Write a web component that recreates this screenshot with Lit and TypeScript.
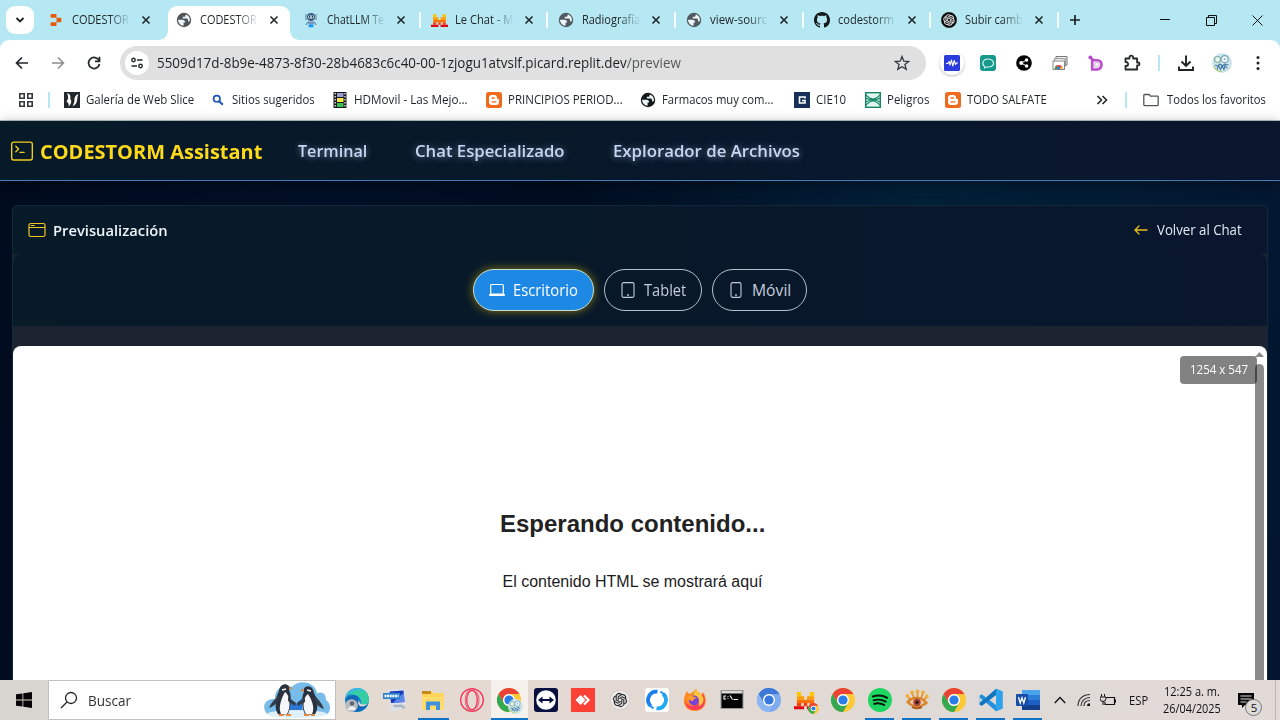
import { LitElement, html, css, svg } from "lit";
import { customElement, property } from "lit/decorators.js";

/* Single-line label condensed or stretched to an exact advance width. */
@customElement("fit-text")
class FitText extends LitElement {
  @property({ type: Number }) w = 50;
  static styles = css`
    :host { display: inline-block; flex: none; white-space: nowrap; }
    .t { display: inline-block; transform-origin: 0 50%; width: max-content; }
  `;
  render() { return html`<span class="t"><slot></slot></span>`; }
  firstUpdated() {
    const s = this.renderRoot.querySelector(".t") as HTMLElement;
    this.style.width = this.w + "px";
    s.style.transform = `scaleX(${this.w / s.offsetWidth})`;
  }
}

const ico = (w: number, h: number, vb: string, body: unknown) =>
  html`<svg width=${w} height=${h} viewBox=${vb} fill="none">${body}</svg>`;

const globe = (c: string) => ico(16, 16, "0 0 16 16", svg`
  <circle cx="8" cy="8" r="7.200" fill=${c}/>
  <path d="M2.100 7.800H6.200C8 7.800 9.200 8.800 9.200 10.600H7.600V13.700C4.400 13.600 2.100 11 2.100 7.800Z" fill="#eef6f8"/>
  <path d="M9.600 2.500V3.400C9.600 4.300 9 4.800 8.200 4.800H6.800V6.500H10.400C11.500 6.500 12 7.200 12 8.100V9.400L13.700 9.200C14.500 6 12.600 3.200 9.600 2.500Z" fill="#eef6f8"/>`);

const chrome = (s = 24) => ico(s, s, "0 0 24 24", svg`
  <circle cx="12" cy="12" r="12" fill="#fcc934"/>
  <path d="M1.600 6A12 12 0 0 1 22.400 6H12A6 6 0 0 0 6.800 15Z" fill="#ea4335"/>
  <path d="M1.600 6A12 12 0 0 0 12 24L17.200 15A6 6 0 0 1 6.800 15Z" fill="#34a853"/>
  <circle cx="12" cy="12" r="6" fill="#fff"/><circle cx="12" cy="12" r="4.600" fill="#2b7de9"/>`);

const close = ico(10, 10, "0 0 10 10", svg`<path d="M1.500 1.500l7 7M8.500 1.500l-7 7" stroke="#20282b" stroke-width="1.600"/>`);

const knot = (bg: string, fg: string, rim: string) => svg`
  <circle cx="12" cy="12" r="11.600" fill=${bg} stroke=${rim} stroke-width=".6"/>
  <path transform="translate(3.600 3.600) scale(.7)" fill=${fg} stroke=${fg} stroke-width=".4" d="M22.2819 9.8211a5.9847 5.9847 0 0 0-.5157-4.9108 6.0462 6.0462 0 0 0-6.5098-2.9A6.0651 6.0651 0 0 0 4.9807 4.1818a5.9847 5.9847 0 0 0-3.9977 2.9 6.0462 6.0462 0 0 0 .7427 7.0966 5.98 5.98 0 0 0 .511 4.9107 6.051 6.051 0 0 0 6.5146 2.9001A5.9847 5.9847 0 0 0 13.2599 24a6.0557 6.0557 0 0 0 5.7718-4.2058 5.9894 5.9894 0 0 0 3.9977-2.9001 6.0557 6.0557 0 0 0-.7475-7.0729zm-9.022 12.6081a4.4755 4.4755 0 0 1-2.8764-1.0408l.1419-.0804 4.7783-2.7582a.7948.7948 0 0 0 .3927-.6813v-6.7369l2.02 1.1686a.071.071 0 0 1 .038.052v5.5826a4.504 4.504 0 0 1-4.4945 4.4944zm-9.6607-4.1254a4.4708 4.4708 0 0 1-.5346-3.0137l.142.0852 4.783 2.7582a.7712.7712 0 0 0 .7806 0l5.8428-3.3685v2.3324a.0804.0804 0 0 1-.0332.0615L9.74 19.9502a4.4992 4.4992 0 0 1-6.1408-1.6464zM2.3408 7.8956a4.485 4.485 0 0 1 2.3655-1.9728V11.6a.7664.7664 0 0 0 .3879.6765l5.8144 3.3543-2.0201 1.1685a.0757.0757 0 0 1-.071 0l-4.8303-2.7865A4.504 4.504 0 0 1 2.3408 7.872zm16.5963 3.8558L13.1038 8.364 15.1192 7.2a.0757.0757 0 0 1 .071 0l4.8303 2.7913a4.4944 4.4944 0 0 1-.6765 8.1042v-5.6772a.79.79 0 0 0-.407-.667zm2.0107-3.0231l-.142-.0852-4.7735-2.7818a.7759.7759 0 0 0-.7854 0L9.409 9.2297V6.8974a.0662.0662 0 0 1 .0284-.0615l4.8303-2.7866a4.4992 4.4992 0 0 1 6.6802 4.66zM8.3065 12.863l-2.02-1.1638a.0804.0804 0 0 1-.038-.0567V6.0742a4.4992 4.4992 0 0 1 7.3757-3.4537l-.142.0805L8.704 5.459a.7948.7948 0 0 0-.3927.6813zm1.0976-2.3654l2.602-1.4998 2.6069 1.4998v2.9994l-2.5974 1.4997-2.6067-1.4997Z"/>`;

const mistral = (s: number) => ico(s, s, "0 0 16 16", svg`
  <path d="M2 2h3v3H2zM11 2h3v3h-3z" fill="#ffc400"/><path d="M2 5h5v2.500H2zM9 5h5v2.500H9z" fill="#ff9d00"/>
  <path d="M2 7.500h12v2.300H2z" fill="#ff7000"/><path d="M2 9.800h3v2.200H2zM6.800 9.800h2.400v2.200H6.800zM11 9.800h3v2.200h-3z" fill="#f5400a"/>
  <path d="M0 12h7v2H0zM9 12h7v2H9z" fill="#e00612"/>`);

const blogger = ico(16, 16, "0 0 16 16", svg`
  <rect width="16" height="16" rx="2.500" fill="#f06a1d"/>
  <path d="M5.800 3h2.600A2.600 2.600 0 0 1 11 5.600c0 .9.4 1.200 1.200 1.300.6.1.8.4.8 1V10a3 3 0 0 1-3 3H6a3 3 0 0 1-3-3V5.800A2.800 2.800 0 0 1 5.800 3Z" fill="#fff"/>
  <path d="M6 6h2.300M6 9.800h4" stroke="#f06a1d" stroke-width="1.300" stroke-linecap="round"/>`);

const github = ico(16, 16, "0 0 16 16", svg`<path fill="#14191c" d="M8 0C3.58 0 0 3.58 0 8c0 3.54 2.29 6.53 5.47 7.59.4.07.55-.17.55-.38 0-.19-.01-.82-.01-1.49-2.01.37-2.53-.49-2.69-.94-.09-.23-.48-.94-.82-1.13-.28-.15-.68-.52-.01-.53.63-.01 1.08.58 1.23.82.72 1.21 1.87.87 2.33.66.07-.52.28-.87.51-1.07-1.78-.2-3.64-.89-3.64-3.95 0-.87.31-1.59.82-2.15-.08-.2-.36-1.02.08-2.12 0 0 .67-.21 2.2.82.64-.18 1.32-.27 2-.27s1.36.09 2 .27c1.53-1.04 2.2-.82 2.2-.82.44 1.1.16 1.92.08 2.12.51.56.82 1.27.82 2.15 0 3.07-1.87 3.75-3.65 3.95.29.25.54.73.54 1.48 0 1.07-.01 1.93-.01 2.2 0 .21.15.46.55.38A8.01 8.01 0 0 0 16 8c0-4.42-3.58-8-8-8Z"/>`);

const replit = ico(16, 16, "0 0 16 16", svg`<path d="M3.400 2h4.300c.5 0 .8.3.8.8v3H3.400c-.5 0-.8-.3-.8-.8V2.800c0-.5.3-.8.8-.8ZM8.500 5.800h4c.5 0 .8.3.8.8v2.800c0 .5-.3.8-.8.8h-4ZM3.400 10.200h5.100v3c0 .5-.3.8-.8.8H3.400c-.5 0-.8-.3-.8-.8V11c0-.5.3-.8.8-.8Z" fill="#e8590c"/>`);

const robot = ico(16, 16, "0 0 16 16", svg`
  <circle cx="8" cy="5" r="4" fill="#3a5b7d"/><rect x="5" y="3.400" width="6" height="3" rx="1.500" fill="#cfe7f7"/>
  <circle cx="6.600" cy="4.900" r=".8" fill="#123"/><circle cx="9.400" cy="4.900" r=".8" fill="#123"/>
  <path d="M3 2v6M13 2v6" stroke="#6c8bab" stroke-width="1.200"/><path d="M4.500 9.500h7l-1 3h-5z" fill="#7894b8"/>
  <rect x="5.500" y="12.600" width="5" height="2.600" rx="1" fill="#1597ff"/><path d="M3 13l1.600-3M13 13l-1.600-3" stroke="#4474a8"/>`);

const tabs = [
  { i: replit, t: "CODESTOR", w: 57, active: false, sep: false },
  { i: globe("#4f5559"), t: "CODESTOR", w: 57, active: true, sep: false },
  { i: robot, t: "ChatLLM Te", w: 57, active: false, sep: true },
  { i: mistral(17), t: "Le Chat - M", w: 58, active: false, sep: true },
  { i: globe("#4f5b61"), t: "Radiografía", w: 58, active: false, sep: true },
  { i: globe("#4f5b61"), t: "view-sourc", w: 57, active: false, sep: true },
  { i: github, t: "codestorm", w: 56, active: false, sep: true },
  { i: ico(16, 16, "0 0 24 24", knot("#0b0b0b", "#fff", "#0b0b0b")), t: "Subir camb", w: 58, active: false, sep: true },
];

const marks = [
  { x: 64, w: 108, t: "Galería de Web Slice", i: ico(16, 16, "0 0 16 16", svg`<rect width="16" height="16" fill="#22272e"/><path d="M3 1.500c3 0 4 2.500 3.200 5.500C8 9 7.500 12 4.500 14.500 5.500 11 3.500 11 2.500 9 4.500 8 4.500 4 3 1.500ZM14.500 2c-3 1-4.500 4-4 7l-1.800 5.500 3-2.500C14 9 12.500 6 14.500 2Z" fill="#fff"/>`) },
  { x: 210, w: 83, t: "Sitios sugeridos", i: ico(16, 16, "0 0 16 16", svg`<circle cx="6.800" cy="6.800" r="3.200" stroke="#1d55b8" stroke-width="1.700"/><path d="M9.200 9.200l3.600 3.600" stroke="#1d55b8" stroke-width="2"/>`) },
  { x: 332, w: 114, t: "HDMovil - Las Mejo...", i: ico(16, 16, "0 0 16 16", svg`<rect x="1.500" width="13" height="16" fill="#15181a"/><path d="M5 1h6.500v4H5z" fill="#9f9bd0"/><path d="M5 6h6.500v4H5z" fill="#f2e64a"/><path d="M5 11h6.500v4H5z" fill="#3bbf52"/><path d="M3.200 1v14M13 1v14" stroke="#fff" stroke-width="1.200" stroke-dasharray="1.500 1.500"/>`) },
  { x: 486, w: 115, t: "PRINCIPIOS PERIOD...", i: blogger },
  { x: 640, w: 111, t: "Farmacos muy com...", i: globe("#15181a") },
  { x: 794, w: 30, t: "CIE10", i: ico(16, 16, "0 0 16 16", svg`<rect width="16" height="16" fill="#17305a"/><path d="M11 6.500V5H5.500v6H11V8.500H8" stroke="#fff" stroke-width="1.600"/>`) },
  { x: 865, w: 42, t: "Peligros", i: ico(16, 16, "0 0 16 16", svg`<rect x=".7" y=".7" width="14.600" height="14.600" fill="#e4f5ee" stroke="#128765" stroke-width="1.400"/><path d="M1 3C4 6 5 7 8 7S12 6 15 3M1 13C4 10 5 9 8 9S12 10 15 13M1 6c2 1 3 2 7 2s5-1 7-2M1 10c2-1 3-2 7-2s5 1 7 2" stroke="#128765" stroke-width="1.100"/>`) },
  { x: 945, w: 80, t: "TODO SALFATE", i: blogger },
];

const avatar = (s: number) => ico(s, s, "0 0 20 20", svg`
  <circle cx="10" cy="10" r="10" fill="#cfe6ea"/><circle cx="5.500" cy="6.500" r="3" stroke="#7cae9b" stroke-width="1.200" fill="#eef7ee"/>
  <circle cx="12.700" cy="6.200" r="3.500" stroke="#78a7c4" stroke-width="1.200" fill="#f6fbfd"/><circle cx="12.700" cy="6.200" r="1.100" fill="#9cb1c5"/>
  <path d="M3 12l3 1 2-2 2.500 2 2-2 4 1M5 16.500l1.500-4 2 4 1.500-3.500 2 3.500 1-4 2.500 3" stroke="#3f78a4" stroke-width="1.100"/><path d="M2 13.500c2 4 5 5 8 5" stroke="#a8cf75" stroke-width="1.200"/>`);

const extensions = [
  html`<span class="halo">${ico(16, 16, "0 0 16 16", svg`<rect width="16" height="16" rx="1.500" fill="#2a3ddc"/><path d="M2 8.500h1.800L5 6.500l1 3.500 1.500-5 1.300 6L10.300 5.500l1.200 4 1-1.500H14" stroke="#fff" stroke-width="1.100" stroke-linejoin="round"/>`)}</span>`,
  ico(16, 16, "0 0 16 16", svg`<rect width="16" height="16" rx="3" fill="#16988c"/><path d="M4.500 11.500C1.500 9.500 2.500 4 8 4s7 5 4 7c-2 1.300-4 1-5 .8L4.700 13Z" stroke="#d6f6f1" stroke-width="1.100"/>`),
  ico(16, 16, "0 0 16 16", svg`<circle cx="8" cy="8" r="7.800" fill="#050505"/><path d="M10.500 5L5.300 8l5.200 3" stroke="#fff"/><circle cx="5.200" cy="8" r="2" fill="#fff"/><circle cx="10.600" cy="5" r="1.700" fill="#fff"/><circle cx="10.600" cy="11" r="1.700" fill="#fff"/>`),
  ico(16, 16, "0 0 16 16", svg`<path d="M4 4V1.500h11v8.500h-2" stroke="#777" fill="#f4f4f4"/><path d="M2.500 6V3.700h10.800v8" stroke="#888" fill="#fafafa"/><rect x="1" y="6" width="11.500" height="8.500" fill="#fff" stroke="#888"/><path d="M2.700 14a4 4 0 0 1 8 0" fill="#e94335"/><path d="M2.700 14a4 4 0 0 1 1.500-3l2.500 3" fill="#2ea44f"/><path d="M10.700 14a4 4 0 0 0-.8-2.500L6.700 14" fill="#fbc02d"/><circle cx="6.700" cy="13" r="1.500" fill="#2e7de9"/>`),
  ico(16, 16, "0 0 16 16", svg`<path d="M4.200 3v11.500h5.300a4.700 4.700 0 0 0 0-9.300H4.200" stroke="#b84fc9" stroke-width="2.600" fill="#fff"/><circle cx="2.400" cy="2.400" r="2" fill="#b84fc9"/><circle cx="8.800" cy="9.800" r="2.300" stroke="#c98bd4" stroke-width=".8" fill="#fff"/>`),
  ico(18, 18, "0 0 18 18", svg`<path d="M2.500 4.500h4v-1a1.800 1.800 0 0 1 3.600 0v1h4v4h1a1.400 1.400 0 0 1 0 2.800h-1v4.200H2.500V12h.6a2 2 0 0 0 0-4h-.6Z" stroke="#25282b" stroke-width="1.800" stroke-linejoin="round"/>`),
];

const taskIcons: { i: unknown; run?: boolean; active?: boolean }[] = [
  { i: ico(24, 24, "0 0 24 24", svg`<circle cx="12" cy="12" r="12" fill="#1787cf"/><path d="M1 8C4-3 24-3 24 12c0 5-5 6-8 5 2-8-7-13-15-9Z" fill="#35cda4"/><path d="M1 8C5-2 17-2 21 4 16 0 5 2 1 10Z" fill="#3cb9e8"/><path d="M1 11C5 5 14 7 14 12c0 4 4 7 9 3-3 8-12 11-18 7Z" fill="#1468b6"/><path d="M14 12c0 4 3 6 9 3.500-2 2-4 3-6 3-3 0-5-3-3-6.500Z" fill="#e5ddd7"/><circle cx="6.500" cy="17.500" r="6.300" fill="#b8bcc0"/><circle cx="7" cy="15.500" r="2.300" fill="#5e6872"/><path d="M2.800 22c0-5 7.800-5 7.800 0Z" fill="#eef0f2"/>`) },
  { i: ico(24, 24, "0 0 24 24", svg`<path d="M5 2l17-1 1 15-15 1Z" fill="#dbe2ee"/><path d="M6.500 3.500l14-1 1 11.500-13.500 1Z" fill="#1d3bb6"/><path d="M14 10l7-5 .5 9-11 1Z" fill="#5c86ea"/><path d="M10 17l9-.5 4 3.500-10 2Z" fill="#a9b4c6"/><path d="M5 20l13-1 2 2-13 2.500Z" fill="#dde3eb"/><rect x="0" y="5" width="17" height="6" fill="#2c83ce"/><path d="M1.500 8h14" stroke="#fff" stroke-width="2.500" stroke-dasharray="2 .6"/>`) },
  { i: ico(24, 24, "0 0 24 24", svg`<path d="M1 3h9l2 2h11v17H1Z" fill="#ffd45a"/><path d="M1 3h9v3H1Z" fill="#c98a18"/><path d="M1 9h22v13H1Z" fill="#ffdc6b"/><path d="M5 22v-8.500h14V22h-4v-4.500H9V22Z" fill="#3f92db"/>`), run: true },
  { i: ico(24, 24, "0 0 24 24", svg`<circle cx="12" cy="12" r="11.300" stroke="#ee3a5c" stroke-width="1.400"/><ellipse cx="12" cy="12" rx="5.300" ry="9.800" stroke="#ee3a5c" stroke-width="1.400"/><path d="M12 .7C3 3 3 21 12 23.300M14.500 3c6 2.500 6 15.500 0 18" stroke="#f0647d" stroke-width="1.100"/>`) },
  { i: html`<span class="stack">${chrome()}<span class="mini">${avatar(15)}</span></span>`, run: true, active: true },
  { i: ico(24, 24, "0 0 24 24", svg`<rect width="24" height="24" rx="3" fill="#07103f"/><circle cx="12" cy="12" r="9.800" fill="#fff"/><path d="M4 12l4.500-3.500v2.500h7V8.500L20 12l-4.500 3.500V13h-7v2.500Z" fill="#07103f"/>`) },
  { i: ico(24, 24, "0 0 24 24", svg`<rect width="24" height="24" fill="#fb4136"/><path d="M4.500 12L9.500 7l5 5-5 5Z" fill="#fff"/><path d="M13 7.500l4.500 4.500L13 16.500" stroke="#fff" stroke-width="2.200"/>`) },
  { i: ico(20, 20, "0 0 24 24", knot("#efedeb", "#222", "#bbb")) },
  { i: ico(24, 24, "0 0 24 24", svg`<rect width="24" height="24" rx="3" fill="#fff"/><path d="M5.800 18A8.300 8.300 0 0 1 12.500 3.700" stroke="#1b80ea" stroke-width="3.800"/><path d="M18.200 6A8.300 8.300 0 0 1 11.500 20.300" stroke="#20aaf5" stroke-width="3.800"/><path d="M3.500 16.500l5 4M20.500 7.500l-5-4" stroke="#1d93ee" stroke-width="2"/>`) },
  { i: ico(24, 24, "0 0 24 24", svg`<path d="M2 7l2-4 2 3 4-2c3-3 4-3 4-3-1 3 4 4 5 6l1-3c6 9 2 19-8 19S-1 15 2 7Z" fill="#ff8a22"/><path d="M19 5c5 6 4 17-7 17C5 22 2 17 2 12c2 6 7 7 11 5 5-2 6-7 6-12Z" fill="#fb3d5b"/><path d="M14 1c-1 3 5 5 6 8 2 5-2 9-5 9 3-3 0-7-3-8-3-2-1-6 2-9Z" fill="#ffc83a"/><circle cx="11" cy="12.500" r="5" fill="#7a41d8"/><path d="M5 8c4-1 5 1 9 2-2 1-4 1-4 3-3 0-5-2-5-5Z" fill="#ff9d29"/>`) },
  { i: ico(24, 24, "0 0 24 24", svg`<rect x="1" y="2.500" width="22" height="18" fill="#050505" stroke="#979797"/><rect x="1.500" y="3" width="21" height="2.500" fill="#d9d9d9"/><path d="M6 8H4v3h2M8 8v.8M8 10.200v.8M10 7.500l2.500 4M13.500 11.500H18" stroke="#fff" stroke-width="1.100"/>`) },
  { i: ico(24, 24, "0 0 24 24", svg`<circle cx="12" cy="12" r="12" fill="#7eaaf0"/><path d="M1.600 6A12 12 0 0 1 22.400 6H12A6 6 0 0 0 6.800 15Z" fill="#3f79d8"/><path d="M1.600 6A12 12 0 0 0 12 24L17.200 15A6 6 0 0 1 6.800 15Z" fill="#8db6f5"/><circle cx="12" cy="12" r="6" fill="#fff"/><circle cx="12" cy="12" r="4.600" fill="#3678df"/>`) },
  { i: html`<span class="stack">${mistral(23)}<span class="mini">${chrome(11)}</span></span>` },
  { i: chrome() },
  { i: ico(24, 24, "0 0 24 24", svg`<circle cx="12" cy="12" r="12" fill="#1ed760"/><path d="M4.800 8.500c5-1.500 10.300-1 14.400 1.300M5.500 12.300c4.300-1.200 8.700-.7 12.300 1.300M6 15.800c3.700-1 7.300-.5 10.300 1.200" stroke="#08140c" stroke-width="1.900" stroke-linecap="round"/>`), run: true },
  { i: ico(24, 24, "0 0 24 24", svg`<path d="M3 9l3 3M7 5l2 5M12.500 4v5M18 5l-2 5M21.500 9l-3 3" stroke="#e59a2f" stroke-width="2"/><g fill="#efad3a"><circle cx="2.500" cy="8" r="1.900"/><circle cx="7" cy="4.500" r="1.900"/><circle cx="12.500" cy="3.500" r="1.900"/><circle cx="18" cy="4.500" r="1.900"/><circle cx="21.800" cy="8.500" r="1.900"/></g><path d="M1 14c5-7 17-7 22 1-6 6-17 6-22-1Z" fill="#d9832b"/><path d="M4.500 14c4-4 11-4 15 .5-4 4-11 4-15-.5Z" fill="#e9c9a0"/><circle cx="12" cy="14.300" r="3.700" fill="#a8443a"/><circle cx="12" cy="14.300" r="1.500" fill="#280d0a"/><path d="M7 19c3 1.500 7 1.500 10 0" stroke="#b25a20" stroke-width="2"/>`), run: true },
  { i: chrome(), run: true },
  { i: ico(24, 24, "0 0 24 24", svg`<path d="M17 .8L23.500 3.500v17L17 23.300 7 14.500l-4.200 3.300L.6 16.500V7.500l2.200-1.300L7 9.500Z" fill="#2191de"/><path d="M17.500 6.500v11L10.500 12Z" fill="#dfd9d5"/><path d="M.6 16.500l2.200 1.300L17.500 6.500V.8L.6 15.500Z" fill="#1274bd"/><path d="M.6 9.500v5L3.500 12Z" fill="#dfd9d5"/><path d="M17 .8L23.500 3.500v17L17 23.300Z" fill="#2da3ee"/>`), run: true },
  { i: ico(24, 24, "0 0 24 24", svg`<rect x="6" y="2" width="18" height="20" rx="1.500" fill="#1d5fc4"/><path d="M6 2h18v5H6z" fill="#4aa3ec"/><path d="M6 7h18v5H6z" fill="#2c7ed8"/><path d="M6 17h18v5H6z" fill="#123f8c"/><rect y="6" width="12" height="12" rx="1" fill="#164ca5"/><path d="M2.500 9l1.700 6L6 9.800 7.800 15 9.500 9" stroke="#fff" stroke-width="1.300"/>`), run: true },
];

@customElement("app-root")
class AppRoot extends LitElement {
  static styles = css`
    :host { display: flex; flex-direction: column; width: 1280px; height: 720px; overflow: hidden; font-family: "Open Sans", "Noto Sans", sans-serif; color: #1f2326; }
    * { box-sizing: border-box; }
    svg { display: block; flex: none; }
    .center { display: flex; align-items: center; justify-content: center; }

    .strip { height: 40px; flex: none; background: #b5e8f3; display: flex; align-items: stretch; padding-left: 6px; }
    .chev { width: 28px; height: 28px; margin: 6px 4px 0 0; border-radius: 9px; background: #fff; flex: none; }
    .tab { width: 127.600px; flex: none; display: flex; padding: 6px 0 0 2px; }
    .body { display: flex; align-items: center; height: 28px; width: 122px; padding-left: 8px; }
    .active .body { background: #fff; height: 34px; border-radius: 9px 9px 0 0; padding-bottom: 6px; position: relative; }
    .active .body::before, .active .body::after { content: ""; position: absolute; bottom: 0; width: 9px; height: 9px; }
    .active .body::before { left: -9px; background: radial-gradient(circle at 0 0, transparent 8.500px, #fff 9px); }
    .active .body::after { right: -9px; background: radial-gradient(circle at 100% 0, transparent 8.500px, #fff 9px); }
    .fav { width: 16px; height: 16px; flex: none; }
    .title { width: 60px; margin: 0 9px 0 8px; flex: none; font-size: 12.300px; line-height: 18px; -webkit-mask-image: linear-gradient(90deg, #000 62%, transparent 98%); mask-image: linear-gradient(90deg, #000 62%, transparent 98%); }
    .sep { width: 2px; height: 16px; background: #f4fcfe; margin: 6px 0 0 3px; }
    .plus { width: 30px; padding-left: 2px; }
    .win { margin-left: auto; display: flex; }
    .win .center { width: 46px; }

    .chrome-wrap { background: #b5e8f3; flex: none; }
    .tools { height: 40px; background: #fff; border-radius: 9px 9px 0 0; display: flex; align-items: center; padding-top: 6px; }
    .navs { display: flex; padding-left: 4px; width: 120px; }
    .nav { width: 36px; height: 34px; }
    .omni { width: 806px; height: 34px; border-radius: 17px; background: #e0e0e0; display: flex; align-items: center; padding: 0 15px 0 5px; margin-right: 8px; }
    .site { width: 24px; height: 24px; border-radius: 50%; background: #fff; margin-right: 8px; }
    .url { font-size: 14px; line-height: 20px; color: #1d2023; }
    .url i { font-style: normal; color: #55585a; }
    .star { margin-left: auto; }
    .ext { width: 36px; height: 34px; }
    .halo { width: 24px; height: 24px; border-radius: 50%; background: #fff; box-shadow: 0 1px 3px #0004; display: flex; align-items: center; justify-content: center; }
    .vsep { width: 18px; }
    .bar { width: 2px; height: 16px; background: #b5e8f3; }

    .marks { height: 40px; background: #fff; flex: none; display: flex; align-items: center; font-size: 12.300px; line-height: 18px; padding: 0 14px 0 18px; }
    .marks .grid { width: 30px; }
    .marks > .bar { margin-right: 14px; }
    .mark { display: flex; align-items: center; gap: 6px; flex: none; }
    .all { margin-left: auto; display: flex; align-items: center; }
    .all .bar { margin: 0 16px 0 17px; }
    .all fit-text { margin-left: 8px; }

    .page { height: 560px; flex: none; border-top: 1px solid #b8c2c6; background: linear-gradient(100deg, #010b1e 0%, #010f26 25%, #010d20 42%, #021f38 68%, #021a34 84%, #03152f 100%); display: flex; flex-direction: column; }
    .head { height: 60px; flex: none; background: linear-gradient(90deg, #071a28, #08182a 50%, #0a162e); border-bottom: 1px solid #3b7cba; box-shadow: 0 3px 12px #0006; display: flex; align-items: center; padding-left: 11px; }
    .brand { color: #ffd91a; font-weight: 700; font-size: 19.800px; line-height: 30px; margin: 3px 36px 0 7px; }
    .link { color: #c9d6f2; font-weight: 600; font-size: 16.600px; line-height: 26px; margin-right: 48px; text-shadow: 0 0 8px #b9c9ee66, 0 2px 6px #b9c9ee44; }
    .panel { margin: 24px 12px 0; border: 1px solid #12293c; border-bottom: 0; border-radius: 5px 5px 0 0; background: #1c2331; flex: 1; display: flex; flex-direction: column; overflow: hidden; }
    .phead { height: 48px; flex: none; background: linear-gradient(90deg, #071a28, #08182a 60%, #09162e); display: flex; align-items: center; padding: 0 25px 0 15px; }
    .ptitle { color: #f1f5fb; font-weight: 600; font-size: 15px; line-height: 22px; margin-left: 7px; }
    .back { margin-left: auto; display: flex; align-items: center; gap: 9px; color: #e3e9f4; font-size: 14px; line-height: 20px; }
    .devices { height: 72px; flex: none; background: linear-gradient(90deg, #071a28, #08182a 60%, #09162e); border-radius: 8px 8px 0 0; display: flex; justify-content: center; gap: 10px; padding-top: 15px; }
    .pill { height: 42px; border: 1px solid #b3bfcd; border-radius: 21px; display: flex; align-items: center; color: #c3cddf; font-size: 15.700px; line-height: 24px; padding: 0 15px; gap: 8px; }
    .pill.on { background: #1e88e5; color: #fff; border-color: #c7dcc9; box-shadow: 0 0 10px #ffd70080; }
    .frame { flex: 1; margin-top: 20px; background: #fff; border-radius: 8px 8px 0 0; display: flex; position: relative; }
    .doc { flex: 1; display: flex; flex-direction: column; align-items: center; font-family: "Liberation Sans", Arial, sans-serif; padding-top: 164px; }
    h2 { margin: 0; font-size: 24px; line-height: 28px; color: #222; }
    p { margin: 35px 0 0; font-size: 16px; line-height: 18px; color: #1c1c1c; }
    .scroll { width: 15px; display: flex; flex-direction: column; align-items: center; padding-top: 6px; }
    .thumb { width: 9px; flex: 1; border-radius: 5px 5px 0 0; background: #8b8b8b; margin-top: 7px; }
    .size { position: absolute; right: 10px; top: 10px; width: 77px; height: 28px; border-radius: 4px; background: #0008; opacity: .92; color: #fff; font-size: 12.300px; line-height: 18px; }

    .task { height: 40px; flex: none; background: linear-gradient(90deg, #d8d6d1, #e5dad2 28%, #e3d9d2 50%, #dfdad7 75%, #e2dad6); display: flex; align-items: stretch; }
    .start { width: 48px; }
    .search { width: 288px; background: #fff; border: 1px solid #c3c1be; display: flex; align-items: center; padding: 0 4px 0 11px; }
    .search fit-text { font-size: 14.800px; line-height: 22px; color: #333; margin: 0 auto 0 10px; }
    .apps { display: flex; padding-left: 2px; flex: none; }
    .app { width: 37.050px; display: flex; align-items: center; justify-content: center; position: relative; }
    .app:nth-child(-n+4) { width: 38.200px; }
    .app.run::after { content: ""; position: absolute; bottom: 0; left: 4px; right: 4px; height: 2px; background: #0f74c8; }
    .app.active { background: #f6f1ed; }
    .app.active::after { left: 0; right: 0; }
    .stack { position: relative; }
    .mini { position: absolute; right: -2px; bottom: -2px; }
    .tray { display: flex; align-items: center; flex: 1; color: #111; font-size: 12.400px; line-height: 17px; padding-left: 2px; }
    .cell { width: 24px; display: flex; justify-content: center; }
    .esp { margin-left: 9px; }
    .clock { width: 58px; margin-left: 15px; display: flex; flex-direction: column; align-items: center; }
    .note { position: relative; margin-left: 17px; }
    .badge { position: absolute; left: 7px; top: 7px; width: 17px; height: 17px; border-radius: 50%; background: #dedcda; border: 1px solid #777; font-size: 11.500px; }
    .edge { width: 1px; align-self: stretch; background: #b9b4b0; margin-left: auto; margin-right: 4px; }
  `;

  render() {
    return html`
      <div class="strip">
        <div class="chev center">${ico(10, 8, "0 0 10 8", svg`<path d="M1.500 2L5 5.500 8.500 2" stroke="#1c2123" stroke-width="1.800"/>`)}</div>
        ${tabs.map(t => html`<div class="tab ${t.active ? "active" : ""}">
          <div class="body"><span class="fav">${t.i}</span><div class="title"><fit-text w=${t.w}>${t.t}</fit-text></div>${close}</div>
          ${t.sep ? html`<span class="sep"></span>` : ""}</div>`)}
        <div class="plus center">${ico(12, 12, "0 0 12 12", svg`<path d="M6 1v10M1 6h10" stroke="#1c2123" stroke-width="1.700"/>`)}</div>
        <div class="win">
          <div class="center">${ico(10, 10, "0 0 10 10", svg`<path d="M0 4.500h10" stroke="#111"/>`)}</div>
          <div class="center">${ico(11, 11, "0 0 11 11", svg`<path d="M.5 2.500h8v8h-8zM2.500 2.500v-2h8v8h-2" stroke="#111"/>`)}</div>
          <div class="center">${ico(11, 11, "0 0 11 11", svg`<path d="M.5.5l10 10M10.500.5l-10 10" stroke="#111"/>`)}</div>
        </div>
      </div>
      <div class="chrome-wrap"><div class="tools">
        <div class="navs">
          <div class="nav center">${ico(14, 14, "0 0 14 14", svg`<path d="M13 7H1.500M7 1.500L1.500 7 7 12.500" stroke="#222629" stroke-width="1.700"/>`)}</div>
          <div class="nav center">${ico(14, 14, "0 0 14 14", svg`<path d="M1 7h11.500M7 1.500L12.500 7 7 12.500" stroke="#8b8e90" stroke-width="1.500"/>`)}</div>
          <div class="nav center">${ico(14, 14, "0 0 14 14", svg`<path d="M12 4.500A5.500 5.500 0 1 0 12.500 8" stroke="#222629" stroke-width="1.700"/><path d="M12.500.8v4.500H8" stroke="#222629" stroke-width="1.700"/>`)}</div>
        </div>
        <div class="omni">
          <span class="site center">${ico(14, 12, "0 0 14 12", svg`<circle cx="3.500" cy="3" r="1.700" stroke="#25282a" stroke-width="1.400"/><path d="M7 3h5.500M1.500 9H7" stroke="#25282a" stroke-width="1.500"/><circle cx="10.500" cy="9" r="1.700" stroke="#25282a" stroke-width="1.400"/>`)}</span>
          <fit-text class="url" w="524">5509d17d-8b9e-4873-8f30-28b4683c6c40-00-1zjogu1atvslf.picard.replit.dev<i>/preview</i></fit-text>
          <span class="star">${ico(18, 18, "0 0 18 18", svg`<path d="M9 2.600l1.800 4.600 4.900.3-3.800 3.100 1.300 4.800L9 12.700l-4.200 2.700 1.300-4.800-3.800-3.100 4.900-.3Z" stroke="#34383a" stroke-width="1.300"/>`)}</span>
        </div>
        ${extensions.map(e => html`<div class="ext center">${e}</div>`)}
        <div class="vsep center"><span class="bar"></span></div>
        <div class="ext center">${ico(18, 18, "0 0 18 18", svg`<path d="M9 1.500v10M4.500 7.500L9 12l4.500-4.500M2 12.500V16h14v-3.500" stroke="#202326" stroke-width="1.900"/>`)}</div>
        <div class="ext center">${avatar(20)}</div>
        <div class="ext center">${ico(4, 16, "0 0 4 16", svg`<g fill="#202326"><circle cx="2" cy="2.500" r="1.500"/><circle cx="2" cy="8" r="1.500"/><circle cx="2" cy="13.500" r="1.500"/></g>`)}</div>
      </div></div>
      <div class="marks">
        <span class="grid">${ico(16, 16, "0 0 16 16", svg`<path d="M1.800 1.800h4.400v4.400H1.800zM9.800 1.800h4.400v4.400H9.800zM1.800 9.800h4.400v4.400H1.800zM9.800 9.800h4.400v4.400H9.800z" stroke="#34383b" stroke-width="1.600"/>`)}</span>
        <span class="bar"></span>
        ${marks.map((m, k) => html`<div class="mark" style="width:${(marks[k + 1]?.x ?? 1067) - m.x}px">${m.i}<fit-text w=${m.w}>${m.t}</fit-text></div>`)}
        <div class="all">
          ${ico(12, 10, "0 0 12 10", svg`<path d="M1.500 1L5.500 5l-4 4M6.500 1l4 4-4 4" stroke="#202326" stroke-width="1.600"/>`)}
          <span class="bar"></span>
          ${ico(16, 14, "0 0 16 14", svg`<path d="M.8 2.500v9.300c0 .5.300.8.800.8h12.800c.5 0 .8-.3.800-.8V4c0-.5-.3-.8-.8-.8H7.500L6 1.500H1.600c-.5 0-.8.4-.8 1Z" stroke="#515558" stroke-width="1.300"/>`)}
          <fit-text w="99">Todos los favoritos</fit-text>
        </div>
      </div>
      <div class="page">
        <div class="head">
          ${ico(22, 22, "0 0 16 16", svg`<path fill="#f2cd1d" d="M6 9a.5.5 0 0 1 .5-.5h3a.5.5 0 0 1 0 1h-3A.5.5 0 0 1 6 9M3.854 4.146a.5.5 0 1 0-.708.708L4.793 6.500 3.146 8.146a.5.5 0 1 0 .708.708l2-2a.5.5 0 0 0 0-.708z"/><path fill="#f2cd1d" d="M2 1a2 2 0 0 0-2 2v10a2 2 0 0 0 2 2h12a2 2 0 0 0 2-2V3a2 2 0 0 0-2-2zm12 1a1 1 0 0 1 1 1v10a1 1 0 0 1-1 1H2a1 1 0 0 1-1-1V3a1 1 0 0 1 1-1z"/>`)}
          <fit-text class="brand" w="222">CODESTORM Assistant</fit-text>
          <fit-text class="link" w="69">Terminal</fit-text>
          <fit-text class="link" w="150">Chat Especializado</fit-text>
          <fit-text class="link" w="187">Explorador de Archivos</fit-text>
        </div>
        <div class="panel">
          <div class="phead">
            ${ico(18, 16, "0 0 18 16", svg`<rect x="1" y="1.500" width="16" height="13" rx="1.800" stroke="#f0c520" stroke-width="1.200"/><path d="M1 5.500h16" stroke="#f0c520" stroke-width="1.100"/><path d="M3 3.500h3.500" stroke="#f0c520"/>`)}
            <fit-text class="ptitle" w="115">Previsualización</fit-text>
            <div class="back">${ico(14, 12, "0 0 14 12", svg`<path d="M13 6H1.500M5 2L1 6l4 4" stroke="#e6bf1e" stroke-width="1.300" stroke-linecap="round"/>`)}<fit-text w="85">Volver al Chat</fit-text></div>
          </div>
          <div class="devices">
            <div class="pill on">${ico(16, 16, "0 0 16 16", svg`<rect x="1.700" y="2.500" width="12.600" height="9.500" rx="1" stroke="#fff" stroke-width="1.200"/><path d="M0 12h16v.700a1.300 1.300 0 0 1-1.300 1.300H1.300A1.300 1.300 0 0 1 0 12.700Z" fill="#fff"/>`)}<fit-text w="65">Escritorio</fit-text></div>
            <div class="pill">${ico(16, 16, "0 0 16 16", svg`<rect x="2" y=".6" width="12" height="14.800" rx="1.600" stroke="#c3cddf" stroke-width="1.100"/><circle cx="8" cy="13" r=".9" fill="#c3cddf"/>`)}<fit-text w="42">Tablet</fit-text></div>
            <div class="pill">${ico(16, 16, "0 0 16 16", svg`<rect x="3" y=".6" width="10" height="14.800" rx="1.600" stroke="#c3cddf" stroke-width="1.100"/><circle cx="8" cy="13" r=".9" fill="#c3cddf"/>`)}<fit-text w="39">Móvil</fit-text></div>
          </div>
          <div class="frame">
            <div class="doc"><h2><fit-text w="265">Esperando contenido...</fit-text></h2><p><fit-text w="260">El contenido HTML se mostrará aquí</fit-text></p></div>
            <div class="scroll">${ico(9, 5, "0 0 9 5", svg`<path d="M4.500 0L9 5H0Z" fill="#8b8b8b"/>`)}<span class="thumb"></span></div>
            <div class="size center"><fit-text w="58">1254 x 547</fit-text></div>
          </div>
        </div>
      </div>
      <div class="task">
        <div class="start center">${ico(16, 16, "0 0 16 16", svg`<path d="M0 2.300L6.500 1.400v6.200H0ZM7.300 1.300L16 0v7.600H7.300ZM0 8.400h6.500v6.200L0 13.700ZM7.300 8.400H16V16l-8.700-1.300Z" fill="#050505"/>`)}</div>
        <div class="search">
          ${ico(18, 18, "0 0 18 18", svg`<circle cx="11" cy="7" r="5.500" stroke="#222" stroke-width="1.300"/><path d="M7 11L1 17" stroke="#222" stroke-width="1.300"/>`)}
          <fit-text w="43">Buscar</fit-text>
          ${ico(68, 36, "0 0 68 36", svg`
            <path d="M4 32C-3 23 4 16 12 17 11 6 22 1 29 5 35-3 52-1 54 11c6-2 9 1 9 7 6 4 5 12 0 15Z" fill="#78bdea"/>
            <path d="M26 16l7 6 6-6v12H26Z" fill="#2d75d3"/><ellipse cx="34" cy="32" rx="30" ry="4" fill="#dff0f8"/>
            <path d="M16 9c1-8 9-8 10-4l3 1-3 2c3 5 2 18-1 24l-9 1C11 29 12 16 16 9Z" fill="#2a3240"/><path d="M22 10c5 3 6 16 2 22h-6c-3-6 0-15 4-22Z" fill="#f5f6f7"/>
            <path d="M16 13C11 18 8 21 6 26c4-1 8-5 10-9M25 15l8 6-1 3-7-5" fill="#333c4a"/><path d="M19 8l4-1" stroke="#f5f6f7" stroke-width="1.600"/>
            <path d="M51 11c-1-8-9-8-10-4l-3 1 3 2c-3 5-2 17 1 22l9 1c5-4 4-15 0-22Z" fill="#2a3240"/><path d="M45 12c-5 3-6 14-2 20h6c3-6 0-14-4-20Z" fill="#f5f6f7"/>
            <path d="M52 14c5 5 7 8 9 13-4-1-8-5-10-9M42 16l-8 5 1 3 7-4" fill="#333c4a"/><path d="M48 9l-4-1" stroke="#f5f6f7" stroke-width="1.600"/>
            <path d="M16 33h5M23 33h5M41 33h5M48 33h4" stroke="#e7873d" stroke-width="2"/><path d="M26 5l4 1-4 2M41 7l-4 1 4 2" fill="#e58d42"/>`)}
        </div>
        <div class="apps">${taskIcons.map(a => html`<div class="app ${a.run ? "run" : ""} ${a.active ? "active" : ""}">${a.i}</div>`)}</div>
        <div class="tray">
          <div class="cell">${ico(12, 8, "0 0 12 8", svg`<path d="M.8 7L6 1.500 11.200 7" stroke="#111" stroke-width="1.300"/>`)}</div>
          <div class="cell">${ico(14, 14, "0 0 14 14", svg`<path d="M1 13C1 6 6 1.500 13 1.500M4 13c0-5 4-8.500 9-8.500M7 13c0-3.500 2.500-5.500 6-5.500" stroke="#333" stroke-width="1.200"/><path d="M10 13c0-1.800 1-2.800 3-2.800V13Z" fill="#111"/>`)}</div>
          <div class="cell">${ico(16, 14, "0 0 16 14", svg`<path d="M6 4.500h8.500v7H5V9" stroke="#111" stroke-width="1.200"/><path d="M15 6.500v3" stroke="#111" stroke-width="2"/><path d="M1.500 1v2.500M4.500 1v2.500M0 4h6v1.500a3 3 0 0 1-6 0ZM3 8v4" stroke="#111"/>`)}</div>
          <fit-text class="esp" w="19">ESP</fit-text>
          <div class="clock"><fit-text w="56">12:25 a. m.</fit-text><fit-text w="58">26/04/2025</fit-text></div>
          <div class="note">${ico(16, 16, "0 0 16 16", svg`<path d="M0 1h16v12H7l-3 3v-3H0Z" fill="#090909"/><path d="M2.500 4h11M2.500 7h11M2.500 10h6" stroke="#dedad7" stroke-width="1.100"/>`)}<span class="badge center">5</span></div>
          <span class="edge"></span>
        </div>
      </div>`;
  }
}
